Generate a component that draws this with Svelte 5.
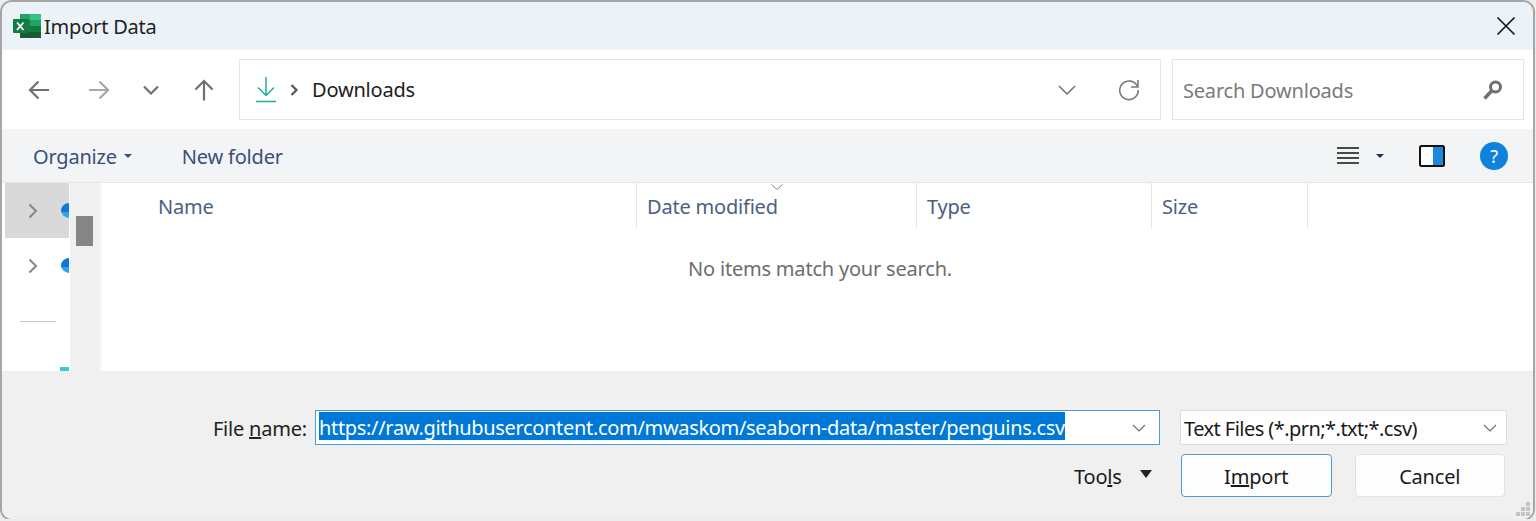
<script lang="ts">
    const columns = [
        { label: 'Name', width: 535 },
        { label: 'Date modified', width: 280 },
        { label: 'Type', width: 235 },
        { label: 'Size', width: 156 }
    ];
</script>

<div class="dialog">
    <header class="titlebar">
        <svg class="xl" width="30" height="26" viewBox="0 0 30 26">
            <rect x="7" y="1" width="21" height="24" fill="#1d7a47" />
            <rect x="7" y="1" width="10" height="6" fill="#21a366" />
            <rect x="17" y="1" width="11" height="6" fill="#33c481" />
            <rect x="17" y="7" width="11" height="6" fill="#21a366" />
            <rect x="17" y="13" width="11" height="6" fill="#107c41" />
            <rect x="7" y="19" width="21" height="6" fill="#185c37" />
            <rect x="0" y="6" width="15" height="14" rx="1" fill="#107c41" />
            <path d="M4 9.500l6.500 7.500M10.500 9.500L4 17" stroke="#fff" stroke-width="1.800" fill="none" />
        </svg>
        <span class="title">Import Data</span>
        <svg class="close" width="20" height="20" viewBox="0 0 20 20">
            <path d="M1.500 1.500l17 17M18.500 1.500l-17 17" stroke="#1a1a1a" stroke-width="1.700" fill="none" />
        </svg>
    </header>

    <div class="addressrow">
        <div class="navbtns">
            <svg width="22" height="22" viewBox="0 0 22 22"><path d="M21 11H2M10.500 2.500L2 11l8.500 8.500" stroke="#6f6f6f" stroke-width="2.200" fill="none" /></svg>
            <svg class="fwd" width="22" height="22" viewBox="0 0 22 22"><path d="M1 11h19M11.500 2.500L20 11l-8.500 8.500" stroke="#a8a8a8" stroke-width="2.200" fill="none" /></svg>
            <svg class="hist" width="16" height="10" viewBox="0 0 16 10"><path d="M1 1.500l7 7 7-7" stroke="#707070" stroke-width="2.200" fill="none" /></svg>
            <svg class="up" width="20" height="22" viewBox="0 0 20 22"><path d="M10 21.500V2M1.500 10.500L10 2l8.500 8.500" stroke="#6f6f6f" stroke-width="2.200" fill="none" /></svg>
        </div>
        <div class="address">
            <svg width="20" height="26" viewBox="0 0 20 26">
                <path d="M10 0v18M2 10.500l8 8 8-8" stroke="#1fae9c" stroke-width="1.500" fill="none" />
                <path d="M0 24.500h20" stroke="#1fae9c" stroke-width="1.500" />
            </svg>
            <svg class="crumb" width="8" height="12" viewBox="0 0 8 12"><path d="M1.500 1l5 5-5 5" stroke="#555" stroke-width="2.200" fill="none" /></svg>
            <span class="path">Downloads</span>
            <svg class="drop" width="18" height="10" viewBox="0 0 18 10"><path d="M1 1l8 8 8-8" stroke="#707070" stroke-width="1.500" fill="none" /></svg>
            <svg class="refresh" width="22" height="22" viewBox="0 0 22 22">
                <path d="M19.500 7.500A9.300 9.300 0 1 0 20.300 11" stroke="#7a7a7a" stroke-width="1.600" fill="none" />
                <path d="M20 1v7h-7" stroke="#7a7a7a" stroke-width="1.600" fill="none" />
            </svg>
        </div>
        <div class="search">
            <span class="nudge">Search Downloads</span>
            <svg width="22" height="22" viewBox="0 0 22 22">
                <circle cx="13.500" cy="8" r="5" stroke="#707070" stroke-width="3" fill="none" />
                <path d="M9.500 12L2.500 19.500" stroke="#707070" stroke-width="3.500" />
            </svg>
        </div>
    </div>

    <div class="toolbar">
        <span class="tool nudge">Organize</span>
        <span class="caret small"></span>
        <span class="tool newfolder nudge">New folder</span>
        <svg class="views" width="24" height="20" viewBox="0 0 24 20">
            <path d="M1 2h22M1 7h22M1 12h22M1 17h22" stroke="#111" stroke-width="1.500" />
        </svg>
        <span class="caret small dark"></span>
        <svg class="pane" width="26" height="22" viewBox="0 0 26 22">
            <rect x="1" y="1" width="24" height="20" rx="1.500" fill="#fff" stroke="#111" stroke-width="2" />
            <rect x="14" y="2" width="10" height="18" fill="#1a8ae0" />
        </svg>
        <svg class="help" width="28" height="28" viewBox="0 0 28 28">
            <circle cx="14" cy="14" r="14" fill="#0f83dc" />
            <text x="14" y="20.500" text-anchor="middle" fill="#fff" font-size="18" font-family="Noto Sans, sans-serif">?</text>
        </svg>
    </div>

    <div class="main">
        <nav class="tree">
            <div class="treeitem selected">
                <svg width="10" height="16" viewBox="0 0 10 16"><path d="M1.500 1.500L8 8l-6.500 6.500" stroke="#868686" stroke-width="2" fill="none" /></svg>
                <span class="cloud"></span>
            </div>
            <div class="treeitem">
                <svg width="10" height="16" viewBox="0 0 10 16"><path d="M1.500 1.500L8 8l-6.500 6.500" stroke="#868686" stroke-width="2" fill="none" /></svg>
                <span class="cloud"></span>
            </div>
            <div class="rule"></div>
            <div class="peek"></div>
        </nav>
        <div class="scrollbar"><div class="thumb"></div></div>
        <section class="list">
            <div class="colhead">
                {#each columns as col, i}
                    <div class="col" style="width: {col.width}px">
                        {col.label}
                        {#if i === 1}
                            <svg class="sort" width="12" height="6" viewBox="0 0 12 6"><path d="M.5.500L6 5.500 11.500.500" stroke="#888" fill="none" /></svg>
                        {/if}
                    </div>
                {/each}
            </div>
            <p class="empty">No items match your search.</p>
        </section>
    </div>

    <footer class="footer">
        <div class="filerow">
            <span class="label nudge">File <u>n</u>ame:</span>
            <div class="filename">
                <span class="selection">https://raw.githubusercontent.com/mwaskom/seaborn-data/master/penguins.csv</span>
                <svg width="14" height="8" viewBox="0 0 14 8"><path d="M1 1l6 6 6-6" stroke="#707070" stroke-width="1.200" fill="none" /></svg>
            </div>
            <div class="filetype">
                <span class="nudge">Text Files (*.prn;*.txt;*.csv)</span>
                <svg width="14" height="8" viewBox="0 0 14 8"><path d="M1 1l6 6 6-6" stroke="#707070" stroke-width="1.200" fill="none" /></svg>
            </div>
        </div>
        <div class="btnrow">
            <span class="tools nudge">Too<u>l</u>s</span>
            <span class="caret big"></span>
            <button class="btn primary">I<u>m</u>port</button>
            <button class="btn">Cancel</button>
        </div>
        <svg class="grip" width="14" height="14" viewBox="0 0 14 14" fill="#c4c4c4">
            <rect x="10" y="0" width="4" height="4" />
            <rect x="5" y="5" width="4" height="4" /><rect x="10" y="5" width="4" height="4" />
            <rect x="0" y="10" width="4" height="4" /><rect x="5" y="10" width="4" height="4" /><rect x="10" y="10" width="4" height="4" />
        </svg>
    </footer>
</div>

<style>
    :global(body) {
        margin: 0;
        background: #ececec;
    }

    .dialog {
        box-sizing: border-box;
        width: 1531px;
        height: 517px;
        margin: 2px 0 0 2px;
        display: flex;
        flex-direction: column;
        overflow: hidden;
        border-radius: 10px;
        box-shadow: 0 0 0 2px #a6a6a6;
        background: #fff;
        font-family: "Noto Sans", "Open Sans", sans-serif;
        font-size: 20px;
        letter-spacing: -0.2px;
        color: #1a1a1a;
    }

    svg {
        display: block;
        flex: none;
    }

    .nudge {
        padding-top: 2px;
    }

    .titlebar {
        height: 48px;
        flex: none;
        display: flex;
        align-items: center;
        padding-left: 11px;
        background: #ebf3f9;
    }

    .title {
        margin-left: 1px;
        color: #222;
    }

    .close {
        margin-left: auto;
        margin-right: 17px;
        margin-top: -1px;
    }

    .addressrow {
        height: 79px;
        flex: none;
        display: flex;
        align-items: center;
        background: #fff;
    }

    .navbtns {
        width: 237px;
        flex: none;
        display: flex;
        align-items: center;
        padding-left: 26px;
        box-sizing: border-box;
    }

    .fwd {
        margin-left: 38px;
    }

    .hist {
        margin-left: 33px;
    }

    .up {
        margin-left: 35px;
    }

    .address {
        box-sizing: border-box;
        width: 922px;
        height: 61px;
        display: flex;
        align-items: center;
        padding-left: 16px;
        border: 1px solid #e4e4e4;
    }

    .crumb {
        margin-left: 14px;
    }

    .path {
        margin-left: 14px;
        color: #202020;
    }

    .drop {
        margin-left: auto;
    }

    .refresh {
        margin-left: 42px;
        margin-right: 20px;
    }

    .search {
        box-sizing: border-box;
        width: 352px;
        height: 61px;
        margin-left: 11px;
        display: flex;
        align-items: center;
        justify-content: space-between;
        padding: 0 19px 0 10px;
        border: 1px solid #e4e4e4;
        color: #7a7a7a;
    }

    .toolbar {
        height: 53px;
        flex: none;
        display: flex;
        align-items: center;
        padding-left: 31px;
        background: #f3f4f6;
        border-bottom: 1px solid #e6e6e6;
    }

    .tool {
        color: #3a5078;
    }

    .newfolder {
        margin-left: 50px;
    }

    .caret {
        flex: none;
        width: 0;
        height: 0;
        border-style: solid;
        border-color: #3a5078 transparent transparent;
    }

    .caret.small {
        margin-left: 7px;
        border-width: 4px 4px 0;
    }

    .caret.dark {
        margin-left: 16px;
        border-color: #1f2f55 transparent transparent;
    }

    .views {
        margin-left: auto;
    }

    .pane {
        margin-left: 35px;
    }

    .help {
        margin-left: 35px;
        margin-right: 25px;
    }

    .main {
        flex: 1;
        min-height: 0;
        display: flex;
    }

    .tree {
        width: 68px;
        flex: none;
        padding: 0 1px 0 3px;
        box-sizing: border-box;
        background: #fff;
    }

    .treeitem {
        height: 55px;
        display: flex;
        align-items: center;
        padding-left: 23px;
        overflow: hidden;
    }

    .treeitem.selected {
        background: #d9d9d9;
    }

    .cloud {
        width: 17px;
        height: 15px;
        flex: none;
        margin-left: 23px;
        border-radius: 50%;
        background: linear-gradient(#0f78d4 60%, #28a8ea 60%);
    }

    .rule {
        width: 36px;
        height: 1px;
        margin: 28px 0 0 15px;
        background: #c8c8c8;
    }

    .peek {
        width: 9px;
        height: 5px;
        margin: 45px 0 0 55px;
        background: #3cc8d8;
    }

    .scrollbar {
        width: 29px;
        flex: none;
        box-sizing: border-box;
        padding: 33px 6px 0;
        background: #f0f0f0;
    }

    .thumb {
        width: 17px;
        height: 30px;
        background: #868686;
    }

    .list {
        flex: 1;
        min-width: 0;
        background: #fff;
        border-left: 3px solid #f7f7f7;
    }

    .colhead {
        height: 45px;
        display: flex;
    }

    .col {
        position: relative;
        box-sizing: border-box;
        padding: 10px 0 0 10px;
        border-right: 1px solid #e5e5e5;
        color: #4c607f;
    }

    .col:first-child {
        padding-left: 56px;
    }

    .sort {
        position: absolute;
        top: 1px;
        left: 134px;
    }

    .empty {
        width: 1436px;
        margin: 27px 0 0;
        text-align: center;
        color: #6d6d6d;
    }

    .footer {
        position: relative;
        flex: none;
        height: 148px;
        box-sizing: border-box;
        padding-top: 39px;
        background: #f0f0f0;
    }

    .filerow {
        display: flex;
        align-items: center;
        height: 35px;
    }

    .label {
        width: 305px;
        flex: none;
        text-align: right;
        color: #222;
    }

    .filename {
        box-sizing: border-box;
        width: 845px;
        height: 35px;
        margin-left: 8px;
        display: flex;
        align-items: center;
        justify-content: space-between;
        padding: 0 13px 0 3px;
        background: #fff;
        border: 1px solid #4a9ad8;
    }

    .selection {
        align-self: flex-start;
        height: 28px;
        margin-top: 1px;
        line-height: 32px;
        letter-spacing: -0.32px;
        background: #0078d7;
        color: #fff;
    }

    .filetype {
        box-sizing: border-box;
        width: 327px;
        height: 35px;
        margin-left: 20px;
        display: flex;
        align-items: center;
        justify-content: space-between;
        padding: 0 9px 0 3px;
        letter-spacing: -0.55px;
        background: #fff;
        border: 1px solid #dcdcdc;
        border-radius: 2px;
    }

    .btnrow {
        display: flex;
        align-items: center;
        height: 43px;
        margin-top: 9px;
    }

    .tools {
        margin-left: 1072px;
    }

    .caret.big {
        margin-left: 18px;
        margin-top: -3px;
        border-width: 8px 6px 0;
        border-color: #222 transparent transparent;
    }

    .btn {
        box-sizing: border-box;
        width: 150px;
        height: 43px;
        margin-left: 23px;
        padding: 2px 0 0;
        font: inherit;
        letter-spacing: inherit;
        color: #1a1a1a;
        background: #fdfdfd;
        border: 1px solid #e2e2e2;
        border-radius: 4px;
    }

    .btn.primary {
        width: 151px;
        margin-left: 29px;
        border-color: #4a9ad8;
    }

    .grip {
        position: absolute;
        right: 3px;
        bottom: 3px;
    }
</style>
